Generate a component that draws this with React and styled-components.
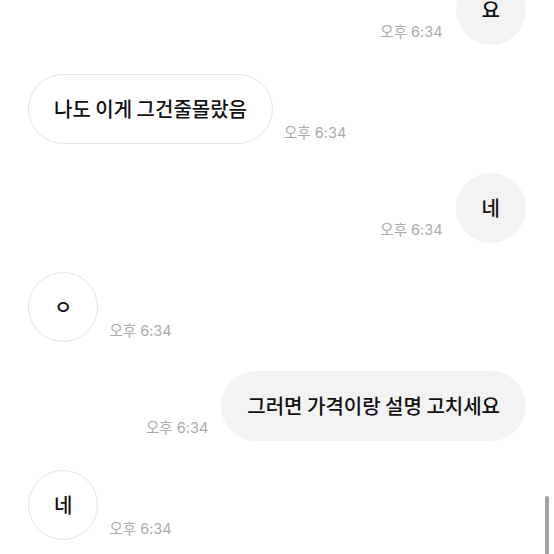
import React from "react";
import styled, { createGlobalStyle } from "styled-components";

const Global = createGlobalStyle`
  html, body {
    margin: 0;
    padding: 0;
    background: #ffffff;
    overflow: hidden;
  }
  body {
    font-family: "Noto Sans CJK KR", "Noto Sans", sans-serif;
  }
`;

const Screen = styled.div`
  position: relative;
  width: 554px;
  height: 554px;
  overflow: hidden;
  background: #ffffff;
`;

const List = styled.div`
  display: flex;
  flex-direction: column;
  gap: 29px;
  padding: 0 28px;
  margin-top: -25px;
`;

const Row = styled.div`
  display: flex;
  align-items: flex-end;
  justify-content: ${(p) => (p.$mine ? "flex-end" : "flex-start")};
  gap: ${(p) => (p.$mine ? "13px" : "11px")};
`;

const Bubble = styled.div`
  box-sizing: border-box;
  height: 70px;
  min-width: 70px;
  padding: 0 25px;
  display: flex;
  align-items: center;
  justify-content: center;
  border-radius: 35px;
  background: ${(p) => (p.$mine ? "#f3f3f3" : "#ffffff")};
  border: 1px solid ${(p) => (p.$mine ? "#f3f3f3" : "#e4e4e4")};
  color: #111111;
  font-size: 20px;
  font-weight: 500;
  line-height: 1;
  white-space: nowrap;
`;

const Time = styled.span`
  font-family: "Inter", "Noto Sans CJK KR", sans-serif;
  font-size: 14.5px;
  line-height: 16px;
  color: #ababab;
  white-space: nowrap;
  margin-bottom: ${(p) => (p.$mine ? "5px" : "3px")};
`;

const Scrollbar = styled.div`
  position: absolute;
  right: 5px;
  top: 496px;
  width: 4px;
  height: 80px;
  border-radius: 2px;
  background: #a3a3a3;
`;

const messages = [
  { mine: true, text: "요" },
  { mine: false, text: "나도 이게 그건줄몰랐음" },
  { mine: true, text: "네" },
  { mine: false, text: "ㅇ" },
  { mine: true, text: "그러면 가격이랑 설명 고치세요" },
  { mine: false, text: "네" },
];

export default function App() {
  return (
    <Screen>
      <Global />
      <List>
        {messages.map((m, i) => (
          <Row key={i} $mine={m.mine}>
            {m.mine && <Time $mine>오후 6:34</Time>}
            <Bubble $mine={m.mine}>{m.text}</Bubble>
            {!m.mine && <Time>오후 6:34</Time>}
          </Row>
        ))}
      </List>
      <Scrollbar />
    </Screen>
  );
}
